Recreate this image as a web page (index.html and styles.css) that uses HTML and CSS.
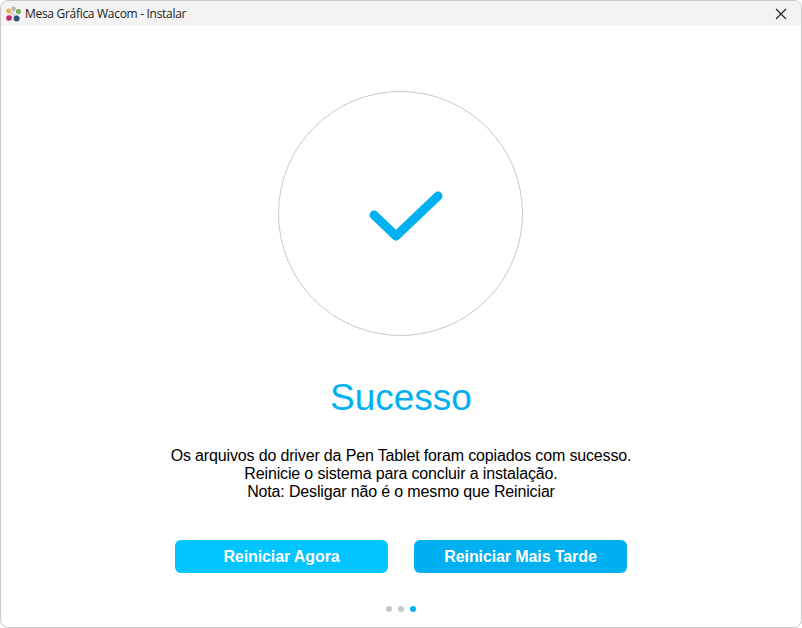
FILE: index.html
```html
<!DOCTYPE html>
<html lang="pt-BR">
<head>
    <meta charset="UTF-8">
    <title>Mesa Gráfica Wacom - Instalar</title>
    <link rel="stylesheet" href="styles.css">
</head>
<body>
    <div class="window">
        <div class="titlebar">
            <svg class="app-icon" width="16" height="16" viewBox="0 0 16 16">
                <path d="M6 7L10 4M6 7l6 3M6 7l-1 4" stroke="#d9d4dc" stroke-width="2"/>
                <circle cx="3.6" cy="5" r="2.4" fill="#e2b34a"/>
                <circle cx="8.6" cy="2.8" r="2.2" fill="#b9b2bb"/>
                <circle cx="13.4" cy="5.4" r="2.5" fill="#6fae55"/>
                <circle cx="4" cy="12" r="2.8" fill="#c4286a"/>
                <circle cx="11.6" cy="12.4" r="3" fill="#35517f"/>
            </svg>
            <span class="title">Mesa Gráfica Wacom - Instalar</span>
            <svg class="close" width="12" height="12" viewBox="0 0 12 12">
                <path d="M1 1l10 10M11 1L1 11" stroke="#222" stroke-width="1.1" fill="none"/>
            </svg>
        </div>
        <div class="content">
            <div class="circle">
                <svg width="76" height="54" viewBox="0 0 76 54">
                    <path d="M5 24L27 45L69 5" stroke="#00b0f0" stroke-width="9" stroke-linecap="round" stroke-linejoin="round" fill="none"/>
                </svg>
            </div>
            <h1>Sucesso</h1>
            <div class="message">
                <p>Os arquivos do driver da Pen Tablet foram copiados com sucesso.</p>
                <p>Reinicie o sistema para concluir a instalação.</p>
                <p>Nota: Desligar não é o mesmo que Reiniciar</p>
            </div>
            <div class="buttons">
                <button class="btn btn-now">Reiniciar Agora</button>
                <button class="btn btn-later">Reiniciar Mais Tarde</button>
            </div>
            <div class="dots">
                <span class="dot"></span>
                <span class="dot"></span>
                <span class="dot active"></span>
            </div>
        </div>
    </div>
</body>
</html>
```

FILE: styles.css
```css
html, body {
    margin: 0;
    padding: 0;
    height: 100%;
    background: #fff;
}
body {
    font-family: "Liberation Sans", Arial, sans-serif;
}
.window {
    box-sizing: border-box;
    width: 802px;
    height: 628px;
    border: 1px solid #c8c8c8;
    border-radius: 8px;
    overflow: hidden;
    display: flex;
    flex-direction: column;
}
.titlebar {
    height: 25px;
    background: #f3f3f3;
    display: flex;
    align-items: center;
    padding: 0 14px 0 4px;
    flex-shrink: 0;
}
.app-icon {
    margin-right: 4px;
}
.title {
    font-family: "Open Sans", "Noto Sans", sans-serif;
    font-size: 12px;
    letter-spacing: -0.3px;
    color: #1a1a1a;
    flex: 1;
}
.content {
    flex: 1;
    display: flex;
    flex-direction: column;
    align-items: center;
    padding-top: 65px;
}
.circle {
    box-sizing: border-box;
    width: 245px;
    height: 245px;
    margin-right: 2px;
    border: 1px solid #c8c8c8;
    border-radius: 50%;
    display: flex;
    align-items: center;
    justify-content: center;
}
.circle svg {
    margin-left: 13px;
    margin-top: 9px;
}
h1 {
    margin: 40px 0 0;
    font-size: 37px;
    font-weight: normal;
    line-height: 44px;
    color: #00b0f0;
}
.message {
    margin-top: 27px;
    text-align: center;
    font-size: 16px;
    letter-spacing: -0.15px;
    line-height: 18px;
    color: #000;
}
.message p {
    margin: 0;
}
.buttons {
    display: flex;
    gap: 26px;
    margin-top: 39px;
}
.btn {
    width: 213px;
    height: 33px;
    border: none;
    border-radius: 6px;
    color: #fff;
    font-family: inherit;
    font-size: 16px;
    font-weight: bold;
    letter-spacing: -0.1px;
    padding: 0;
}
.btn-now {
    background: #00c5ff;
}
.btn-later {
    background: #00b0f0;
}
.dots {
    display: flex;
    gap: 6px;
    margin-top: 33px;
}
.dot {
    width: 6px;
    height: 6px;
    border-radius: 50%;
    background: #c8c8c8;
}
.dot.active {
    background: #00b0f0;
}
```
